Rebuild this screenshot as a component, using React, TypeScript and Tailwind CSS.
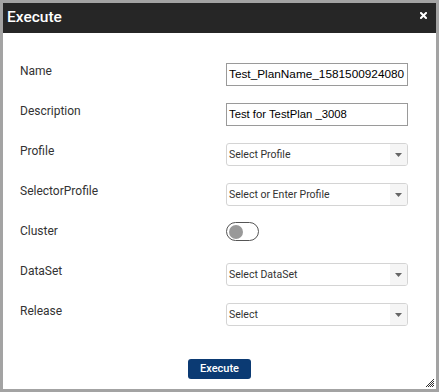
import React from "react";

const Caret = () => (
  <svg width="7" height="4" viewBox="0 0 7 4" className="block">
    <path d="M0 0 H7 L3.5 4 Z" fill="#666" />
  </svg>
);

function Select({ text }: { text: string }) {
  return (
    <div className="flex h-[23px] w-[182px] items-stretch overflow-hidden rounded-[3px] border border-[#d4d4d4] bg-white">
      <div className="flex flex-1 items-center pl-[2px] text-[10.5px] text-[#333]">{text}</div>
      <div className="flex w-[17px] items-center justify-center bg-[#f5f5f5]">
        <Caret />
      </div>
    </div>
  );
}

function TextBox({ value, size }: { value: string; size: string }) {
  return (
    <div
      className={`flex h-[23px] w-[182px] items-center overflow-hidden whitespace-nowrap border border-[#9a9a9a] bg-white pl-[2px] font-['Liberation_Sans',Arial,sans-serif] text-black ${size}`}
    >
      {value}
    </div>
  );
}

function Row({ label, children }: { label: string; children: React.ReactNode }) {
  return (
    <div className="flex h-[40px] items-start">
      <div className="w-[206px] text-[12px] leading-[16px] text-[#333]">{label}</div>
      {children}
    </div>
  );
}

export default function App() {
  return (
    <div className="relative flex h-[392px] w-[439px] flex-col border-[3px] border-[#a3a3a3] bg-white font-['Roboto',Arial,sans-serif]">
      <div className="flex h-[30px] shrink-0 items-center justify-between bg-[#262626] pl-[4px] pr-[9px]">
        <span className="text-[15.5px] font-medium leading-none text-white">Execute</span>
        <svg className="mb-[5px]" width="7" height="7" viewBox="0 0 7 7">
          <path d="M1 1 L6 6 M6 1 L1 6" stroke="white" strokeWidth="2" strokeLinecap="square" />
        </svg>
      </div>
      <div className="flex flex-1 flex-col pl-[17px] pt-[30px]">
        <Row label="Name">
          <TextBox value="Test_PlanName_1581500924080" size="text-[11.8px]" />
        </Row>
        <Row label="Description">
          <TextBox value="Test for TestPlan _3008" size="text-[11.3px]" />
        </Row>
        <Row label="Profile">
          <Select text="Select Profile" />
        </Row>
        <Row label="SelectorProfile">
          <Select text="Select or Enter Profile" />
        </Row>
        <Row label="Cluster">
          <div className="-mt-[1px] flex h-[19px] w-[33px] items-center rounded-full border border-[#555] bg-white pl-[2px]">
            <div className="h-[14px] w-[14px] rounded-full bg-[#999]" />
          </div>
        </Row>
        <Row label="DataSet">
          <Select text="Select DataSet" />
        </Row>
        <Row label="Release">
          <Select text="Select" />
        </Row>
      </div>
      <div className="flex shrink-0 justify-center pb-[10px]">
        <button className="flex h-[20px] w-[63px] items-center justify-center rounded-[3px] bg-[#0b3a73] text-[11px] font-medium text-white">
          Execute
        </button>
      </div>
      <svg className="absolute bottom-[2px] right-[2px]" width="8" height="8" viewBox="0 0 8 8">
        {[
          [7, 0], [6, 1], [7, 2], [5, 2], [4, 3], [6, 3], [7, 4], [5, 4], [3, 4], [2, 5], [4, 5], [6, 5],
          [7, 6], [5, 6], [3, 6], [1, 6], [0, 7], [2, 7], [4, 7], [6, 7],
        ].map(([x, y], i) => (
          <rect key={i} x={x} y={y} width="1" height="1" fill="#333" />
        ))}
      </svg>
    </div>
  );
}
